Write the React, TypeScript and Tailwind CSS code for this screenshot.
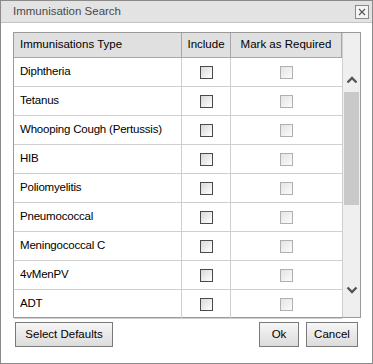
import React from "react";

const rows = [
  "Diphtheria",
  "Tetanus",
  "Whooping Cough (Pertussis)",
  "HIB",
  "Poliomyelitis",
  "Pneumococcal",
  "Meningococcal C",
  "4vMenPV",
  "ADT",
];

function Box({ disabled }: { disabled?: boolean }) {
  return (
    <div
      className={
        disabled
          ? "w-[13px] h-[13px] border border-[#b0b0b0] bg-gradient-to-br from-[#e4e4e4] to-[#fbfbfb]"
          : "w-[13px] h-[13px] border border-[#4a4a4a] bg-gradient-to-br from-[#d8d8d8] to-[#ffffff]"
      }
    />
  );
}

function Btn({ children, className }: { children: React.ReactNode; className: string }) {
  return (
    <div
      className={
        "h-[25px] flex items-center justify-center border border-[#7a7a7a] bg-gradient-to-b from-[#f6f6f6] to-[#dcdcdc] text-[11.5px] text-black " +
        className
      }
    >
      {children}
    </div>
  );
}

export default function App() {
  return (
    <div
      className="w-[373px] h-[364px] border border-[#8a8a8a] bg-white flex flex-col"
      style={{ fontFamily: '"Liberation Sans", Arial, sans-serif' }}
    >
      <div className="h-[22px] shrink-0 bg-[#e3e3e3] border-b border-[#c4c4c4] flex items-center justify-between pl-[12px] pr-[3px]">
        <span className="text-[11.5px] text-[#4a4a4a]">Immunisation Search</span>
        <div className="w-[14px] h-[14px] border border-[#8a8a8a] bg-[#f4f4f4] flex items-center justify-center">
          <svg width="8" height="8" viewBox="0 0 8 8">
            <path d="M1 1L7 7M7 1L1 7" stroke="#555" strokeWidth="1.1" />
          </svg>
        </div>
      </div>
      <div className="pl-[12px] pt-[9px] flex">
        <div className="w-[348px] h-[286px] border border-[#9a9a9a] flex">
          <div className="w-[328px] flex flex-col">
            <div className="h-[25px] shrink-0 bg-[#e0e0e0] border-b border-[#a8a8a8] flex text-[11.5px] text-black">
              <div className="w-[168px] border-r border-[#a8a8a8] flex items-center pl-[6px]">Immunisations Type</div>
              <div className="w-[49px] border-r border-[#a8a8a8] flex items-center justify-center">Include</div>
              <div className="flex-1 border-r border-[#a8a8a8] flex items-center justify-center">Mark as Required</div>
            </div>
            {rows.map((r) => (
              <div key={r} className="h-[29px] shrink-0 border-b border-[#cfcfcf] flex text-[11.5px] text-black">
                <div className="w-[168px] border-r border-[#cfcfcf] flex items-center pl-[6px] tracking-[-0.2px]">{r}</div>
                <div className="w-[49px] border-r border-[#cfcfcf] flex items-center justify-center">
                  <Box />
                </div>
                <div className="flex-1 flex items-center justify-center">
                  <Box disabled />
                </div>
              </div>
            ))}
          </div>
          <div className="w-[18px] bg-[#efefef] border-l border-[#cfcfcf] flex flex-col items-center">
            <div className="h-[59px] shrink-0 flex items-end justify-center pb-[8px]">
              <svg width="12" height="8" viewBox="0 0 12 8">
                <path d="M1.5 6.5L6 2L10.5 6.5" stroke="#555" strokeWidth="2.4" fill="none" />
              </svg>
            </div>
            <div className="w-[15px] h-[113px] shrink-0 bg-[#c9c9c9]" />
            <div className="flex-1 flex items-end justify-center pb-[23px]">
              <svg width="12" height="8" viewBox="0 0 12 8">
                <path d="M1.5 1.5L6 6L10.5 1.5" stroke="#555" strokeWidth="2.4" fill="none" />
              </svg>
            </div>
          </div>
        </div>
      </div>
      <div className="flex items-center pl-[14px] pr-[14px] pt-[4px]">
        <Btn className="w-[98px]">Select Defaults</Btn>
        <div className="flex-1" />
        <Btn className="w-[40px]">Ok</Btn>
        <Btn className="w-[52px] ml-[7px]">Cancel</Btn>
      </div>
    </div>
  );
}
